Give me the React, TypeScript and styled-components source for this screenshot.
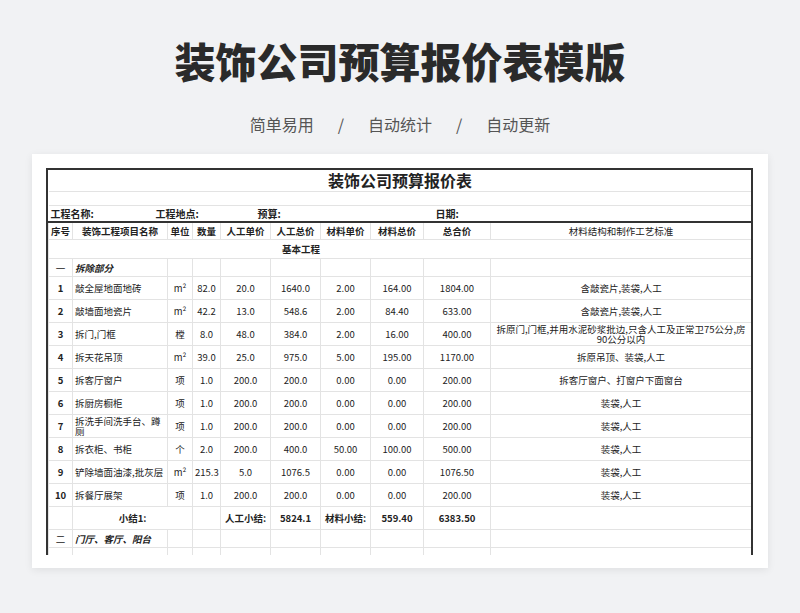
import styled, { createGlobalStyle } from 'styled-components';

const GlobalStyle = createGlobalStyle`
  html, body { margin: 0; padding: 0; }
  body {
    background: #f1f2f4;
    font-family: "Noto Sans CJK SC", "Noto Sans", sans-serif;
    width: 800px;
    height: 613px;
    overflow: hidden;
  }
`;

const Page = styled.div`
  display: flex;
  flex-direction: column;
  align-items: center;
`;

const Heading = styled.h1`
  margin: 32px 0 0;
  font-size: 41px;
  line-height: 56px;
  font-weight: 900;
  color: #2a2a2a;
`;

const Subtitle = styled.div`
  margin-top: 24px;
  display: flex;
  gap: 24px;
  font-size: 16px;
  color: #555;
  line-height: 24px;
`;

const Card = styled.div`
  margin-top: 18px;
  width: 736px;
  height: 414px;
  background: #fff;
  box-shadow: 0 2px 8px rgba(0, 0, 0, 0.08);
  padding: 14px 0 0 14px;
  box-sizing: border-box;
  overflow: hidden;
`;

const Sheet = styled.div`
  width: 707px;
  height: 387px;
  overflow: hidden;
  border-left: 2px solid #333;
  border-right: 2px solid #333;
  border-top: 2px solid #333;
  box-sizing: border-box;
`;

const Table = styled.table`
  width: 703px;
  table-layout: fixed;
  border-collapse: collapse;
  font-size: 9.5px;
  color: #222;
`;

const Cell = styled.td<{ $align?: string; $bold?: boolean; $italic?: boolean; $h?: number }>`
  border: 1px solid #e3e3e3;
  height: ${({ $h }) => $h ?? 22}px;
  padding: 0 2px;
  text-align: ${({ $align }) => $align ?? 'center'};
  font-weight: ${({ $bold }) => ($bold ? 700 : 400)};
  font-style: ${({ $italic }) => ($italic ? 'italic' : 'normal')};
  line-height: 10px;
  overflow: hidden;
`;

const HeadCell = styled(Cell)`
  padding: 0;
  white-space: nowrap;
`;

const TitleCell = styled.td`
  height: 19px;
  text-align: center;
  font-size: 16px;
  font-weight: 700;
  border-bottom: 1px solid #e3e3e3;
  line-height: 19px;
`;

const InfoCell = styled.td`
  height: 15px;
  font-size: 10px;
  font-weight: 700;
  border-bottom: 2px solid #333;
  padding: 0 2px;
  white-space: nowrap;
`;

const InfoLabel = styled.span<{ $w: number }>`
  display: inline-block;
  width: ${({ $w }) => $w}px;
`;

const widths = [24, 95, 25, 28, 50, 50, 50, 53, 67, 261];

type Row = [string, string, string, string, string, string, string, string, string, string];

const rows: Row[] = [
  ['1', '敲全屋地面地砖', 'm²', '82.0', '20.0', '1640.0', '2.00', '164.00', '1804.00', '含敲瓷片,装袋,人工'],
  ['2', '敲墙面地瓷片', 'm²', '42.2', '13.0', '548.6', '2.00', '84.40', '633.00', '含敲瓷片,装袋,人工'],
  ['3', '拆门,门框', '樘', '8.0', '48.0', '384.0', '2.00', '16.00', '400.00', '拆原门,门框,并用水泥砂浆批边,只含人工及正常卫75公分,房90公分以内'],
  ['4', '拆天花吊顶', 'm²', '39.0', '25.0', '975.0', '5.00', '195.00', '1170.00', '拆原吊顶、装袋,人工'],
  ['5', '拆客厅窗户', '项', '1.0', '200.0', '200.0', '0.00', '0.00', '200.00', '拆客厅窗户、打窗户下面窗台'],
  ['6', '拆厨房橱柜', '项', '1.0', '200.0', '200.0', '0.00', '0.00', '200.00', '装袋,人工'],
  ['7', '拆洗手间洗手台、蹲厕', '项', '1.0', '200.0', '200.0', '0.00', '0.00', '200.00', '装袋,人工'],
  ['8', '拆衣柜、书柜', '个', '2.0', '200.0', '400.0', '50.00', '100.00', '500.00', '装袋,人工'],
  ['9', '铲除墙面油漆,批灰层', 'm²', '215.3', '5.0', '1076.5', '0.00', '0.00', '1076.50', '装袋,人工'],
  ['10', '拆餐厅展架', '项', '1.0', '200.0', '200.0', '0.00', '0.00', '200.00', '装袋,人工'],
];

const headers = ['序号', '装饰工程项目名称', '单位', '数量', '人工单价', '人工总价', '材料单价', '材料总价', '总合价', '材料结构和制作工艺标准'];

const emptyCells = (n: number) => Array.from({ length: n }, (_, i) => <Cell key={i} $h={17} />);

export default function App() {
  return (
    <>
      <GlobalStyle />
      <Page>
        <Heading>装饰公司预算报价表模版</Heading>
        <Subtitle>
          <span>简单易用</span><span>/</span><span>自动统计</span><span>/</span><span>自动更新</span>
        </Subtitle>
        <Card>
          <Sheet>
            <Table>
              <colgroup>
                {widths.map((w, i) => <col key={i} style={{ width: w }} />)}
              </colgroup>
              <tbody>
                <tr><TitleCell colSpan={10}>装饰公司预算报价表</TitleCell></tr>
                <tr><Cell colSpan={10} $h={13} style={{ borderLeft: 0, borderRight: 0 }} /></tr>
                <tr>
                  <InfoCell colSpan={10}>
                    <InfoLabel $w={105}>工程名称:</InfoLabel>
                    <InfoLabel $w={102}>工程地点:</InfoLabel>
                    <InfoLabel $w={178}>预算:</InfoLabel>
                    <InfoLabel $w={60}>日期:</InfoLabel>
                  </InfoCell>
                </tr>
                <tr>
                  {headers.map((h, i) => (
                    <HeadCell key={h} $h={16} $bold={i < 9}>{h}</HeadCell>
                  ))}
                </tr>
                <tr><Cell colSpan={10} $h={18} $bold style={{ paddingRight: 200 }}>基本工程</Cell></tr>
                <tr>
                  <Cell $h={17}>一</Cell>
                  <Cell $h={17} $align="left" $bold $italic>拆除部分</Cell>
                  {emptyCells(8)}
                </tr>
                {rows.map((r) => (
                  <tr key={r[0]}>
                    {r.map((v, i) => (
                      <Cell key={i} $bold={i === 0} $align={i === 1 ? 'left' : 'center'}>{v}</Cell>
                    ))}
                  </tr>
                ))}
                <tr>
                  <Cell />
                  <Cell $bold colSpan={2}>小结1:</Cell>
                  <Cell />
                  <Cell $bold>人工小结:</Cell>
                  <Cell $bold>5824.1</Cell>
                  <Cell $bold>材料小结:</Cell>
                  <Cell $bold>559.40</Cell>
                  <Cell $bold>6383.50</Cell>
                  <Cell />
                </tr>
                <tr>
                  <Cell $h={17}>二</Cell>
                  <Cell $h={17} $align="left" $bold $italic style={{ whiteSpace: 'nowrap' }}>门厅、客厅、阳台</Cell>
                  {emptyCells(8)}
                </tr>
                <tr>{emptyCells(10)}</tr>
              </tbody>
            </Table>
          </Sheet>
        </Card>
      </Page>
    </>
  );
}
